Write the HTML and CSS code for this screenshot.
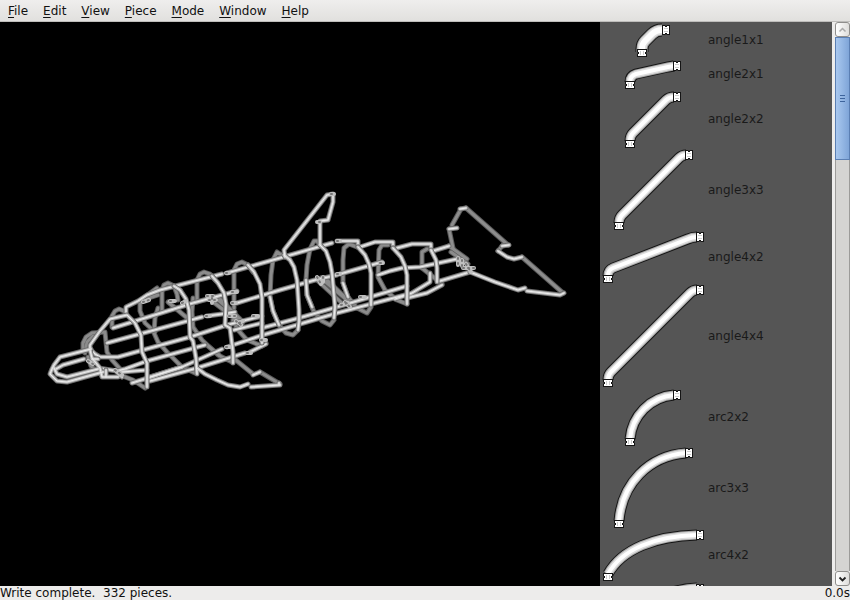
FILE: index.html
```
<!DOCTYPE html>
<html lang="en">
<head>
<meta charset="utf-8">
<title>Piece editor</title>
<link rel="stylesheet" href="styles.css">
</head>
<body>
<nav class="menubar">
  <button><u>F</u>ile</button>
  <button><u>E</u>dit</button>
  <button><u>V</u>iew</button>
  <button><u>P</u>iece</button>
  <button><u>M</u>ode</button>
  <button><u>W</u>indow</button>
  <button><u>H</u>elp</button>
</nav>
<main class="workspace">
  <section class="viewport">
    <svg class="model" viewBox="0 22 600 564" aria-hidden="true">
      <defs>
        <!-- tubes on the far side of the body -->
        <g id="far">
          <path d="M83 351V343L86 337L92 333L105 332M105 332L107 352L112 360L122 371"/>
          <path d="M85 353L87 342L93 336M88 357L91 366L100 374M112 327V316L115 311L119 309L124 311L127 315"/>
          <path d="M120 375L133 380L145 388M162 312V290L164 285L168 283L174 286L180 290"/>
          <path d="M158 308L155 318L154 333L158 342L167 352L182 367L195 373"/>
          <path d="M157 288L146 296L140 303L140 311L145 323L155 332M146 299L158 295"/>
          <path d="M197 302V280L200 274L204 272L210 274L215 280M174 286L177 294L178 300"/>
          <path d="M193 298L192 312L193 327L202 340L218 355L232 362M168 302L192 322"/>
          <path d="M234 308V270L237 264L242 262L248 265L253 272M233 320L238 330L247 340L262 346L266 343"/>
          <path d="M285 257L280 254L277 252L273 260L271 275L270 297L273 311L279 325L286 333L293 335L298 330"/>
          <path d="M320 245L317 241L314 241L310 249L307 265L306 280L307 295L314 312L322 321L330 325L334 320"/>
          <path d="M357 247L349 244L344 248L343 260V283L348 297L357 308L367 313L371 307"/>
          <path d="M388 245L382 245L379 250L378 277L385 290L397 300L407 304"/>
          <path d="M422 268V252L427 249M453 248L449 229M452 225L461 209M466 208L508 245M498 251L503 245M522 257L563 293"/>
          <path d="M212 301L242 324M215 297L240 319M218 297L243 322M318 281L343 304M321 278L347 300M325 278L352 304"/>
          <path d="M422 268L442 284M449 246L467 259M451 252L468 264M232 357L253 374M260 372L280 384M208 346L219 355"/>
        </g>
        <!-- lengthwise rails -->
        <g id="rails">
          <path d="M126 313V307L138 301L147 295L160 290L222 274M227 273L280 258L332 243"/>
          <path d="M113 328L193 303L237 291M107 343L202 317M207 316L222 314L235 312"/>
          <path d="M90 349L95 354L100 357L118 357L143 350L190 337L227 325L262 316"/>
          <path d="M98 368L117 371L125 369L147 361L205 345M122 372L147 370"/>
          <path d="M150 377L182 367L222 349M227 347L263 335L337 313L371 304L405 295"/>
          <path d="M150 381L197 368L245 353M250 352L266 344M132 383L182 367"/>
          <path d="M237 303L280 290L315 280L337 275M340 274L382 262"/>
          <path d="M262 328L299 318L337 307L407 286M234 330L262 323"/>
          <path d="M378 275L390 271L402 268L420 267L457 259M440 281L470 272"/>
          <path d="M360 247L375 242L393 242V248M337 241H358V247M397 248L412 244H431V250M433 251L449 246"/>
          <path d="M430 273V282L412 293L395 299M407 298L427 293L442 285"/>
        </g>
        <!-- near-side ribs, snout and fins -->
        <g id="near">
          <path d="M91 349L60 357L54 365L52 369L50 374L57 381L67 382L103 372"/>
          <path d="M54 368L57 374L67 377L98 369M56 369L63 365L84 359M92 359L98 359"/>
          <path d="M90 348L90 345L100 331L110 319L127 315L135 323L141 335L142 352L147 363V387"/>
          <path d="M90 350L92 358L100 368L102 377L118 377M106 377V370M116 371L122 377"/>
          <path d="M174 286L180 290L186 299L189 310L190 337L193 341L196 358L197 374"/>
          <path d="M212 276L218 283L224 293L226 304L225 325L230 328L233 352V363"/>
          <path d="M248 265L254 272L260 284L262 298V343"/>
          <path d="M270 297L273 311L279 325M284 255L290 260L294 267L297 280L299 310V322L298 330"/>
          <path d="M306 280L307 295L312 307M320 245L326 251L330 262L332 273L335 307L334 318"/>
          <path d="M343 283L348 297M358 247L365 255L369 264L371 273V305"/>
          <path d="M393 248L401 257L405 266L407 275V304"/>
          <path d="M431 250L436 260L437 268V282"/>
          <path d="M285 257L284 250L327 195L333 194V202L328 220L320 221V245"/>
          <path d="M197 368L205 374L217 380L228 385L240 387L248 384M251 387L280 385M253 375L260 372M279 383V385"/>
          <path d="M449 229L457 228M460 209L466 208M502 246L509 245M498 251L507 257L514 259L522 257"/>
          <path d="M470 272L495 282L518 290L525 288M527 291L560 295L564 293"/>
        </g>
        <!-- connector blocks -->
        <g id="joints">
          <path d="M466 264L471 272M463 268H474M458 258V265M462 260V266M212 298V303M209 300H216M207 296H213M232 292H237M232 303H236M236 321L241 325M239 323L243 321M229 316H235M317 277L321 284M323 277V282M345 302L350 307M341 305L348 303M226 273H229M226 347H230M206 316H210M247 353H251M337 241H340M170 301H175M143 302L149 300M182 303L186 301M88 361L93 364M115 370L122 375M337 274H340M380 263H383M360 297H365M253 316H258M261 340H266M331 194H334M320 222H317"/>
        </g>
      </defs>
      <use href="#far" class="far-edge"/>
      <use href="#far" class="far-core"/>
      <use href="#rails" class="edge"/>
      <use href="#rails" class="core"/>
      <use href="#rails" class="shine"/>
      <use href="#near" class="edge"/>
      <use href="#near" class="core"/>
      <use href="#near" class="shine"/>
      <use href="#joints" class="joint"/>
      <use href="#joints" class="joint-dots"/>
    </svg>
  </section>
  <aside class="palette">
    <svg class="symbols" aria-hidden="true">
      <defs>
        <g id="cap">
          <path d="M-5-4H5V-1H4.500V1H5V4H-5V1H-4.500V-1H-5Z" fill="#151515"/>
          <path d="M-4-3H4V-1H3V1H4V3H-4V1H-3V-1H-4Z" fill="#fff"/>
          <path d="M-1.500-2V2M1.500-2V2" stroke="#ccc"/>
        </g>
        <path id="angle1x1" d="M42 30V27Q42 22 45 19L52 12Q56 8 62 8"/>
        <path id="angle2x1" d="M30 24Q30 18 36 16L68 9L74 8"/>
        <path id="angle2x2" d="M30 51Q30 46 33 43L66 10Q69 7 74 7"/>
        <path id="angle3x3" d="M19 75Q19 70 22 67L79 10Q82 7 86 7"/>
        <path id="angle4x2" d="M8 45Q8 39 13 37L88 8Q92 6 97 6"/>
        <path id="angle4x4" d="M8 97Q8 92 11 89L90 10Q93 7 97 7"/>
        <path id="arc2x2" d="M30 51C32 28 50 9 74 7"/>
        <path id="arc3x3" d="M19 75C22 38 48 10 86 7"/>
        <path id="arc4x2" d="M8 45C22 20 55 7 97 6"/>
        <path id="arc4x4" d="M8 97C10 48 48 9 97 7"/>
      </defs>
    </svg>
    <ul class="pieces">
      <li><svg class="wide" width="108" height="36" aria-hidden="true"><use href="#angle1x1" class="p1"/><use href="#angle1x1" class="p2"/><use href="#angle1x1" class="p3"/><use href="#angle1x1" class="p4"/><use href="#cap" transform="translate(42 31)"/><use href="#cap" transform="translate(66 8) rotate(90)"/></svg>angle1x1</li>
      <li><svg width="108" height="32" aria-hidden="true"><use href="#angle2x1" class="p1"/><use href="#angle2x1" class="p2"/><use href="#angle2x1" class="p3"/><use href="#angle2x1" class="p4"/><use href="#cap" transform="translate(30 27)"/><use href="#cap" transform="translate(77 8) rotate(90)"/></svg>angle2x1</li>
      <li><svg width="108" height="58" aria-hidden="true"><use href="#angle2x2" class="p1"/><use href="#angle2x2" class="p2"/><use href="#angle2x2" class="p3"/><use href="#angle2x2" class="p4"/><use href="#cap" transform="translate(30 54)"/><use href="#cap" transform="translate(77 7) rotate(90)"/></svg>angle2x2</li>
      <li><svg width="108" height="83" aria-hidden="true"><use href="#angle3x3" class="p1"/><use href="#angle3x3" class="p2"/><use href="#angle3x3" class="p3"/><use href="#angle3x3" class="p4"/><use href="#cap" transform="translate(19 78)"/><use href="#cap" transform="translate(89 7) rotate(90)"/></svg>angle3x3</li>
      <li><svg width="108" height="52" aria-hidden="true"><use href="#angle4x2" class="p1"/><use href="#angle4x2" class="p2"/><use href="#angle4x2" class="p3"/><use href="#angle4x2" class="p4"/><use href="#cap" transform="translate(8 48)"/><use href="#cap" transform="translate(100 6) rotate(90)"/></svg>angle4x2</li>
      <li><svg width="108" height="105" aria-hidden="true"><use href="#angle4x4" class="p1"/><use href="#angle4x4" class="p2"/><use href="#angle4x4" class="p3"/><use href="#angle4x4" class="p4"/><use href="#cap" transform="translate(8 100)"/><use href="#cap" transform="translate(100 7) rotate(90)"/></svg>angle4x4</li>
      <li><svg width="108" height="58" aria-hidden="true"><use href="#arc2x2" class="p1"/><use href="#arc2x2" class="p2"/><use href="#arc2x2" class="p3"/><use href="#arc2x2" class="p4"/><use href="#cap" transform="translate(30 54)"/><use href="#cap" transform="translate(77 7) rotate(90)"/></svg>arc2x2</li>
      <li><svg width="108" height="83" aria-hidden="true"><use href="#arc3x3" class="p1"/><use href="#arc3x3" class="p2"/><use href="#arc3x3" class="p3"/><use href="#arc3x3" class="p4"/><use href="#cap" transform="translate(19 78)"/><use href="#cap" transform="translate(89 7) rotate(90)"/></svg>arc3x3</li>
      <li><svg width="108" height="52" aria-hidden="true"><use href="#arc4x2" class="p1"/><use href="#arc4x2" class="p2"/><use href="#arc4x2" class="p3"/><use href="#arc4x2" class="p4"/><use href="#cap" transform="translate(8 48)"/><use href="#cap" transform="translate(100 6) rotate(90)"/></svg>arc4x2</li>
      <li><svg width="108" height="105" aria-hidden="true"><use href="#arc4x4" class="p1"/><use href="#arc4x4" class="p2"/><use href="#arc4x4" class="p3"/><use href="#arc4x4" class="p4"/><use href="#cap" transform="translate(100 8) rotate(90)"/></svg></li>
    </ul>
  </aside>
  <div class="scrollbar">
    <button class="step" aria-label="Scroll up"><svg width="9" height="6" aria-hidden="true"><path d="M1.500 4.500L4.500 1.500L7.500 4.500" stroke="#aaa" stroke-width="1.500"/></svg></button>
    <div class="track">
      <div class="thumb"><svg width="5" height="7" aria-hidden="true"><path d="M0 .5H5M0 3.500H5M0 6.500H5" stroke="#3d649c"/></svg></div>
    </div>
    <button class="step" aria-label="Scroll down"><svg width="9" height="6" aria-hidden="true"><path d="M1.500 1.500L4.500 4.500L7.500 1.500" stroke="#222" stroke-width="1.800"/></svg></button>
  </div>
</main>
<footer class="status"><span>Write complete.&nbsp; 332 pieces.</span><span>0.0s</span></footer>
</body>
</html>
```
FILE: styles.css
```
* { box-sizing: border-box; }

body {
  margin: 0;
  height: 100vh;
  display: flex;
  flex-direction: column;
  overflow: hidden;
  background: #edeceb;
  color: #111;
  font: 12px/14px "DejaVu Sans", sans-serif;
}

button {
  border: 0;
  padding: 0;
  background: none;
  color: inherit;
  font: inherit;
}

svg { display: block; fill: none; flex: none; }

.menubar {
  display: flex;
  gap: 15px;
  height: 22px;
  flex: none;
  padding: 0 8px;
  background: linear-gradient(#efeeed, #e1e0de);
  border-bottom: 1px solid #bebdbb;
}
.menubar u { text-underline-offset: 2px; }

.workspace { display: flex; flex: 1; min-height: 0; }

.viewport { flex: 1; min-width: 0; background: #000; }
.model { width: 100%; height: 100%; }
.model use { stroke-linecap: round; stroke-linejoin: round; }
.far-edge { stroke: #5a5a5a; stroke-width: 5px; }
.far-core { stroke: #8c8c8c; stroke-width: 3px; }
.edge { stroke: #6e6e6e; stroke-width: 5px; }
.core { stroke: #c4c4c4; stroke-width: 3px; }
.shine { stroke: #eee; stroke-width: 1px; }
.joint { stroke: #c0c0c0; stroke-width: 4px; }
.joint-dots { stroke: #777; stroke-width: 2px; stroke-dasharray: 1 4; }

.palette { width: 232px; flex: none; overflow: hidden; background: #555; color: #1a1a1a; }
.symbols { width: 0; height: 0; }
.pieces { margin: 0; padding: 0; list-style: none; }
.pieces li { display: flex; align-items: center; }
.p1 { stroke: #151515; stroke-width: 11px; }
.p2 { stroke: #a8a8a8; stroke-width: 9px; }
.p3 { stroke: #dedede; stroke-width: 7px; }
.p4 { stroke: #fff; stroke-width: 4px; }
.wide .p1 { stroke-width: 13px; }
.wide .p2 { stroke-width: 11px; }
.wide .p3 { stroke-width: 9px; }
.wide .p4 { stroke-width: 6px; }

.scrollbar {
  width: 15px;
  flex: none;
  display: flex;
  flex-direction: column;
  margin-left: 3px;
}
.step {
  height: 15px;
  flex: none;
  display: flex;
  align-items: center;
  justify-content: center;
  border: 1px solid #8f8e8c;
  border-radius: 3px;
  background: linear-gradient(90deg, #fff, #dedddb);
}
.track { flex: 1; background: #d5d4d2; border: solid #9c9b99; border-width: 0 1px; }
.thumb {
  height: 23%;
  margin: 0 -1px;
  display: flex;
  align-items: center;
  justify-content: center;
  border: 1px solid #5b7fb3;
  background: linear-gradient(90deg, #a9c8ef, #7fa5d8);
}

.status { display: flex; justify-content: space-between; flex: none; height: 14px; }
```
